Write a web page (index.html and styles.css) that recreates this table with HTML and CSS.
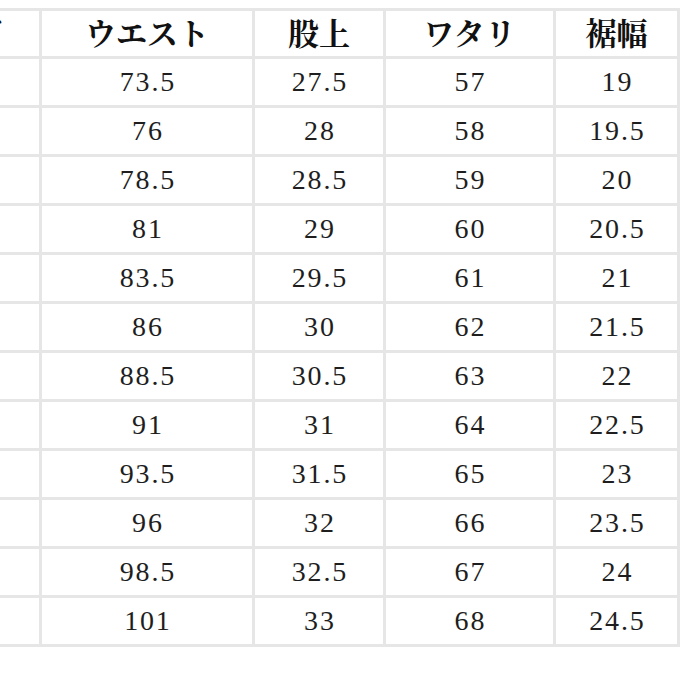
FILE: index.html
```html
<!DOCTYPE html>
<html lang="ja">
<head>
<meta charset="utf-8">
<link rel="stylesheet" href="styles.css">
</head>
<body>
<div class="sheet">
  <div class="cell head">サイズ</div>
  <div class="cell head">ウエスト</div>
  <div class="cell head">股上</div>
  <div class="cell head">ワタリ</div>
  <div class="cell head">裾幅</div>

  <div class="cell num">XS</div><div class="cell num">73.5</div><div class="cell num">27.5</div><div class="cell num">57</div><div class="cell num">19</div>
  <div class="cell num">S</div><div class="cell num">76</div><div class="cell num">28</div><div class="cell num">58</div><div class="cell num">19.5</div>
  <div class="cell num">M</div><div class="cell num">78.5</div><div class="cell num">28.5</div><div class="cell num">59</div><div class="cell num">20</div>
  <div class="cell num">L</div><div class="cell num">81</div><div class="cell num">29</div><div class="cell num">60</div><div class="cell num">20.5</div>
  <div class="cell num">XL</div><div class="cell num">83.5</div><div class="cell num">29.5</div><div class="cell num">61</div><div class="cell num">21</div>
  <div class="cell num">2XL</div><div class="cell num">86</div><div class="cell num">30</div><div class="cell num">62</div><div class="cell num">21.5</div>
  <div class="cell num">3XL</div><div class="cell num">88.5</div><div class="cell num">30.5</div><div class="cell num">63</div><div class="cell num">22</div>
  <div class="cell num">4XL</div><div class="cell num">91</div><div class="cell num">31</div><div class="cell num">64</div><div class="cell num">22.5</div>
  <div class="cell num">5XL</div><div class="cell num">93.5</div><div class="cell num">31.5</div><div class="cell num">65</div><div class="cell num">23</div>
  <div class="cell num">6XL</div><div class="cell num">96</div><div class="cell num">32</div><div class="cell num">66</div><div class="cell num">23.5</div>
  <div class="cell num">7XL</div><div class="cell num">98.5</div><div class="cell num">32.5</div><div class="cell num">67</div><div class="cell num">24</div>
  <div class="cell num">8XL</div><div class="cell num">101</div><div class="cell num">33</div><div class="cell num">68</div><div class="cell num">24.5</div>
</div>
</body>
</html>
```

FILE: styles.css
```css
html, body {
  margin: 0;
  padding: 0;
  background: #ffffff;
  overflow: hidden;
}

.sheet {
  display: grid;
  grid-template-columns: 164px 210px 128px 167px 121px;
  grid-template-rows: 45px repeat(12, 46px);
  gap: 3px;
  padding: 3px;
  background: #e6e6e6;
  width: max-content;
  margin-top: 8px;
  margin-left: -128px;
}

.cell {
  background: #ffffff;
  display: flex;
  align-items: center;
  justify-content: center;
  color: #1e1e1e;
}

.head {
  font-family: "Noto Serif CJK JP", "Noto Sans CJK JP", serif;
  font-weight: 700;
  font-size: 31px;
  color: #111111;
  padding-bottom: 5px;
  box-sizing: border-box;
}

.num {
  font-family: "Liberation Serif", "Times New Roman", serif;
  font-size: 28px;
  letter-spacing: 1.8px;
  text-indent: 1.8px;
}
```
